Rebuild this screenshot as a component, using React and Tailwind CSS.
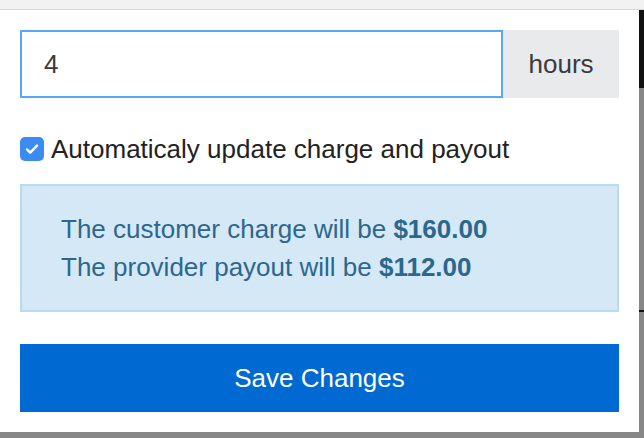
const font = { fontFamily: '"Liberation Sans", Arial, sans-serif' };

const Checkbox = () => (
  <span className="flex h-[24px] w-[24px] shrink-0 items-center justify-center rounded-[5px] bg-[#3b8bf1]">
    <svg width="16" height="16" viewBox="0 0 16 16" fill="none">
      <path d="M3 8.4l3.2 3.2L13 4.6" stroke="#fff" strokeWidth="2.4" strokeLinecap="round" strokeLinejoin="round" />
    </svg>
  </span>
);

const App = () => {
  return (
    <div className="flex h-[438px] w-[644px] flex-col bg-[#878787]" style={font}>
      <div className="h-[10px] shrink-0 border-b border-[#d8d8d8] bg-[#f2f2f2]" />
      <div className="flex h-[422px] shrink-0">
        <div className="flex w-[639px] flex-col bg-white px-[20px] pt-[20px]">
          <div className="flex h-[68px]">
            <div className="flex w-[484px] items-center border-2 border-[#58a8f6] pl-[22px] text-[26px] text-[#3a3a3a]">
              4
            </div>
            <div className="flex w-[116px] items-center justify-center bg-[#e9eaec] text-[26px] text-[#3a3a3a]">
              hours
            </div>
          </div>

          <label className="mt-[39px] flex h-[24px] items-center gap-[7px] text-[26px] text-[#222]">
            <Checkbox />
            <span>Automaticaly update charge and payout</span>
          </label>

          <div className="mt-[23px] border-2 border-[#b6dcf0] bg-[#d4e9f5] pb-[24px] pl-[39px] pt-[24px] text-[26px] leading-[38px] text-[#2d678d]">
            <p>
              The customer charge will be <b>$160.00</b>
            </p>
            <p>
              The provider payout will be <b>$112.00</b>
            </p>
          </div>

          <button className="mt-[32px] flex h-[68px] items-center justify-center bg-[#0069d2] text-[26px] text-white">
            Save Changes
          </button>
        </div>
        <div className="flex w-[5px] flex-col">
          <div className="h-[78px] bg-[#111]" />
          <div className="h-[222px]" />
          <div className="h-[2px] bg-[#111]" />
        </div>
      </div>
    </div>
  );
};

export default App;
